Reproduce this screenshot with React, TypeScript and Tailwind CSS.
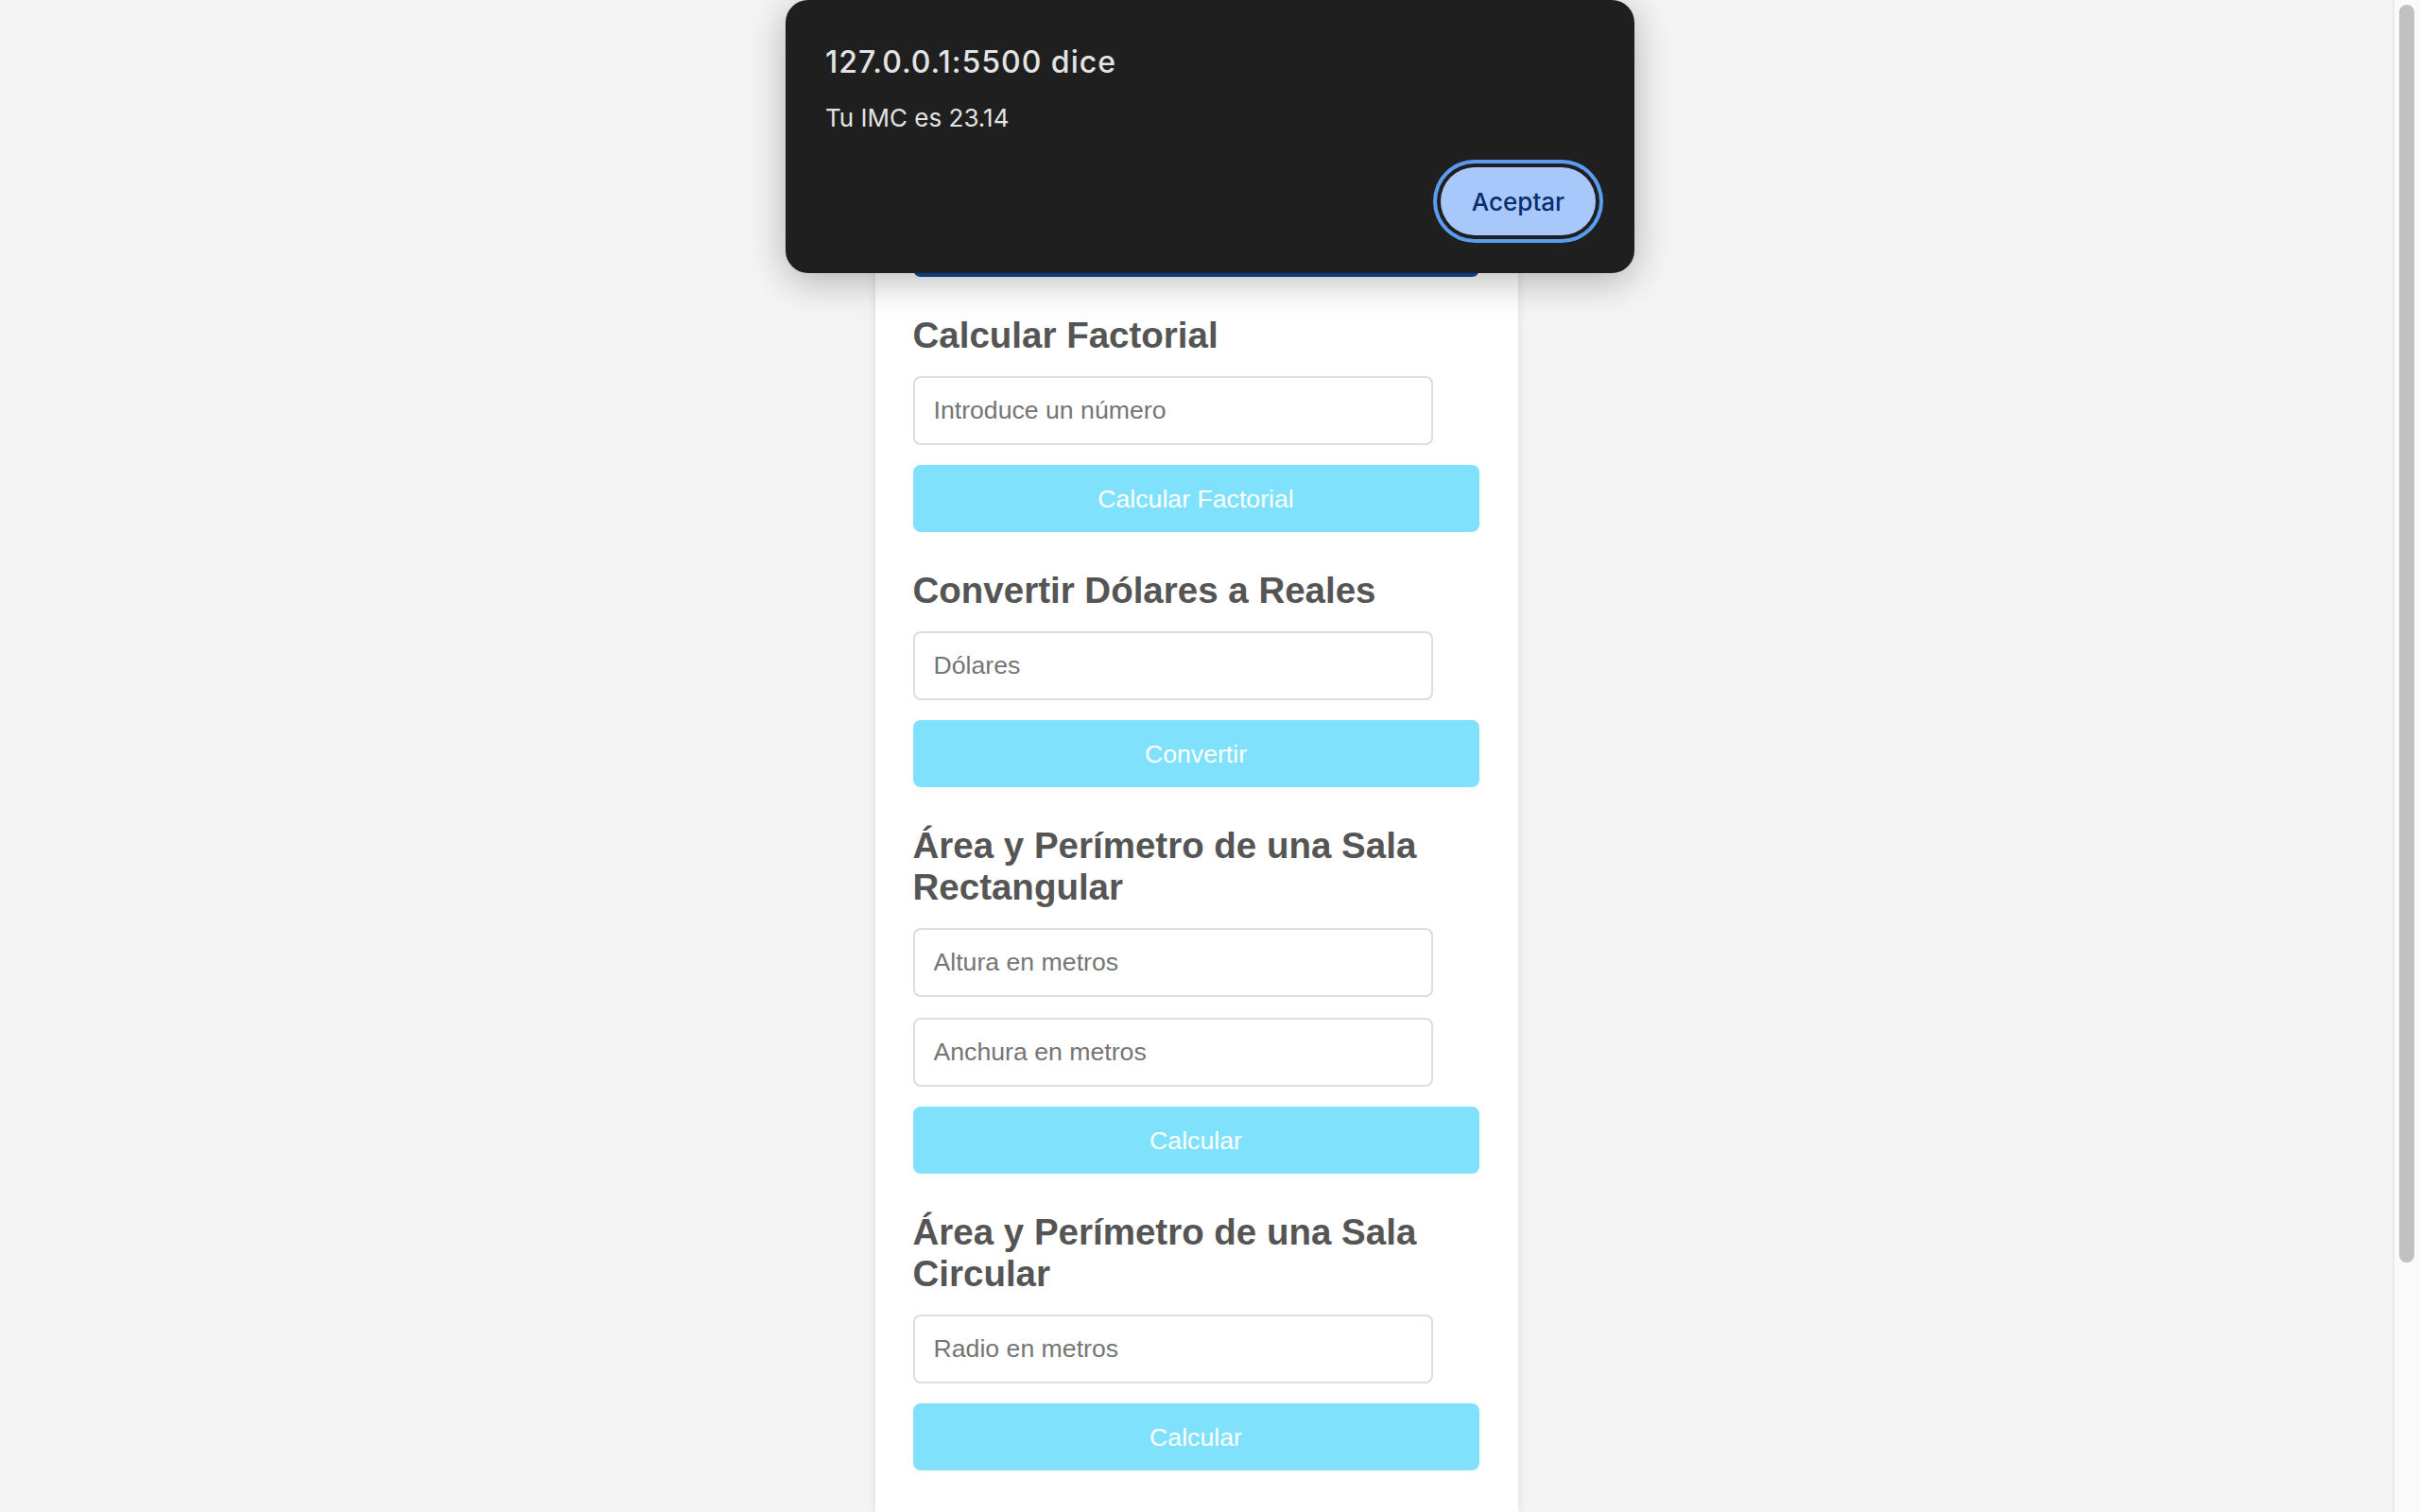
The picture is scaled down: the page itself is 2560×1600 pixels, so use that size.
import React from "react";

function Field({ placeholder, className = "mb-[21px]" }: { placeholder: string; className?: string }) {
  return (
    <input
      type="text"
      placeholder={placeholder}
      className={`block h-[73px] w-[550px] shrink-0 rounded-[8px] border-2 border-[#dddddd] bg-white pl-[20px] text-[26.67px] text-[#333] outline-none placeholder:text-[#757575] ${className}`}
    />
  );
}

function Btn({ label, dark = false }: { label: string; dark?: boolean }) {
  return (
    <button
      type="button"
      className={`block h-[71px] w-[599px] shrink-0 rounded-[8px] text-center text-[26.67px] text-white ${
        dark ? "bg-[#0b4c99]" : "bg-[#80e1fd]"
      }`}
    >
      {label}
    </button>
  );
}

function Heading({ children }: { children: React.ReactNode }) {
  return (
    <h3 className="mt-[40px] mb-[21px] w-[599px] text-[38.5px] font-bold leading-[44px] text-[#555555]">
      {children}
    </h3>
  );
}

export default function App() {
  return (
    <div className="relative flex h-[1600px] w-full overflow-hidden bg-[#f4f4f4] font-['Liberation_Sans',Arial,sans-serif]">
      <div className="flex flex-1 justify-center">
        <div className="flex w-[680px] flex-col items-start bg-white pl-[40px] pr-[41px] pt-[34px] shadow-[0_0_10px_rgba(0,0,0,0.1)]">
          {/* IMC section (mostly hidden under dialog) */}
          <Field placeholder="Peso en kg" />
          <Field placeholder="Altura en metros" />
          <Btn label="Calcular IMC" dark />

          <Heading>Calcular Factorial</Heading>
          <Field placeholder="Introduce un número" />
          <Btn label="Calcular Factorial" />

          <Heading>Convertir Dólares a Reales</Heading>
          <Field placeholder="Dólares" />
          <Btn label="Convertir" />

          <Heading>Área y Perímetro de una Sala Rectangular</Heading>
          <Field placeholder="Altura en metros" className="mb-[22px]" />
          <Field placeholder="Anchura en metros" />
          <Btn label="Calcular" />

          <Heading>Área y Perímetro de una Sala Circular</Heading>
          <Field placeholder="Radio en metros" />
          <Btn label="Calcular" />
        </div>
      </div>

      {/* scrollbar */}
      <div className="flex w-[29px] shrink-0 flex-col border-l-2 border-[#e8e8e8] bg-[#fafafa] pl-[5px] pr-[6px] pt-[5px]">
        <div className="h-[1331px] w-[16px] rounded-full bg-[#c1c1c1]" />
      </div>

      {/* alert dialog */}
      <div className="absolute left-[831px] top-0 flex w-[898px] flex-col rounded-[24px] bg-[#1f1f1f] pl-[42px] pr-[41px] pt-[46px] pb-[40px] font-['Inter',sans-serif] shadow-[0_8px_40px_rgba(0,0,0,0.28)]">
        <div className="text-[32px] font-medium leading-[40px] tracking-[1px] text-[#e3e3e3]">127.0.0.1:5500 dice</div>
        <div className="mt-[23px] text-[26px] leading-[32px] text-[#e3e3e3]">Tu IMC es 23.14</div>
        <div className="mt-[36px] flex justify-end">
          <button
            type="button"
            className="h-[72px] w-[164px] rounded-full bg-[#a8c7fa] text-[26px] font-medium text-[#062e6f] shadow-[0_0_0_4px_#1f1f1f,0_0_0_8px_#5b9bf0]"
          >
            Aceptar
          </button>
        </div>
      </div>
    </div>
  );
}
